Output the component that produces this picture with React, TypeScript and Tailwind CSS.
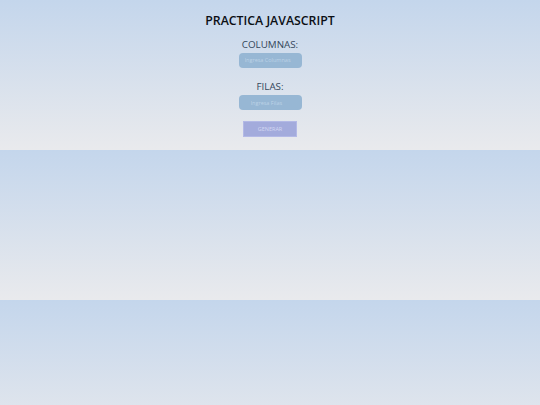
export default function App() {
  return (
    <div
      className="h-[405px] w-full bg-[linear-gradient(180deg,#c4d6ec_0%,#e9eaed_100%)] bg-[length:100%_150px] bg-repeat"
      style={{ fontFamily: '"Open Sans", "Liberation Sans", sans-serif' }}
    >
      <div className="flex flex-col items-center pt-[13px]">
        <h1 className="text-[12.3px] leading-[16px] font-semibold text-[#0b0f14]">
          PRACTICA JAVASCRIPT
        </h1>

        <label className="mt-[10px] text-[9.8px] leading-[12px] font-medium text-[#34475b]">COLUMNAS:</label>
        <input
          type="text"
          placeholder="Ingresa Columnas"
          className="mt-[1.5px] h-[15px] w-[63px] rounded-[4px] bg-[#97b7d4] px-[6px] text-[5.5px] text-white outline-none placeholder:text-[#bcd2e6]"
        />

        <label className="mt-[13.5px] text-[9.8px] leading-[12px] font-medium text-[#34475b]">FILAS:</label>
        <input
          type="text"
          placeholder="Ingresa Filas"
          className="mt-[2px] h-[15px] w-[63px] rounded-[4px] bg-[#97b7d4] px-[12px] text-[5.5px] text-white outline-none placeholder:text-[#bcd2e6]"
        />

        <button className="mt-[11px] h-[16px] w-[54px] border border-[#b3b9e6] bg-[#a3abdc] text-[5.5px] text-[#d3d7f2]">
          GENERAR
        </button>
      </div>
    </div>
  )
}
